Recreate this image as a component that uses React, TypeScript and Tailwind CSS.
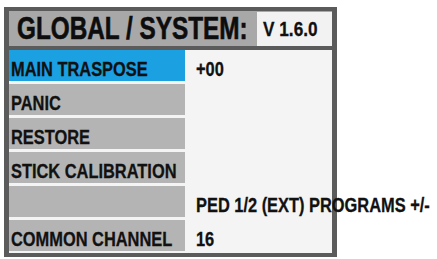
import React from 'react';

const FONT = { fontFamily: '"Liberation Sans", Arial, sans-serif' };

const ROWS: { label: string; value?: string; active?: boolean }[] = [
  { label: 'MAIN TRASPOSE', value: '+00', active: true },
  { label: 'PANIC' },
  { label: 'RESTORE' },
  { label: 'STICK CALIBRATION' },
  { label: '', value: 'PED 1/2 (EXT) PROGRAMS +/-' },
  { label: 'COMMON CHANNEL', value: '16' },
];

// condensed look: no narrow face installed, so squeeze the bold face
const Narrow: React.FC<{ children: React.ReactNode; className?: string }> = ({ children, className = '' }) => (
  <span className={`inline-block origin-left scale-x-[0.82] whitespace-nowrap [-webkit-text-stroke:0.3px_#111] ${className}`}>
    {children}
  </span>
);

const MenuRow: React.FC<{ label: string; value?: string; active?: boolean }> = ({ label, value, active }) => (
  <div className="flex h-[31px]">
    <div
      className={`w-[176px] shrink-0 pl-[2px] pt-[7px] leading-[24px] text-[20px] font-bold text-[#111] ${
        active ? 'bg-[#1ba0e2]' : 'bg-[#b4b4b4]'
      }`}
    >
      <Narrow>{label}</Narrow>
    </div>
    <div className="flex-1 min-w-0 pl-[11px] pt-[7px] leading-[24px] text-[20px] font-bold text-[#111]">
      {value && <Narrow>{value}</Narrow>}
    </div>
  </div>
);

export default function App() {
  return (
    <div className="w-[437px] h-[259px] overflow-hidden bg-white pt-[7px] pl-[4px]" style={FONT}>
      <div className="w-[333px] border-x-[5px] border-y-4 border-[#5b5b5b] bg-[#5b5b5b]">
        <div className="flex h-[35px] bg-[#a8a8a8]">
          <div className="flex-1 min-w-0 pl-[8px] pt-[1px] leading-[32px] text-[32px] font-bold text-[#0d0d0d]">
            <span className="inline-block origin-left scale-x-[0.76] whitespace-nowrap [-webkit-text-stroke:0.6px_#0d0d0d]">
              GLOBAL / SYSTEM:
            </span>
          </div>
          <div className="w-[75px] shrink-0 mt-[1px] flex items-center pl-[6px] bg-[#f2f2f2] text-[21px] font-bold text-[#111]">
            <Narrow>V 1.6.0</Narrow>
          </div>
        </div>
        <div className="mt-[4px] flex flex-col gap-[3px] bg-[#f4f4f4] pb-[2px]">
          {ROWS.map((r, i) => (
            <MenuRow key={i} {...r} />
          ))}
        </div>
      </div>
    </div>
  );
}
